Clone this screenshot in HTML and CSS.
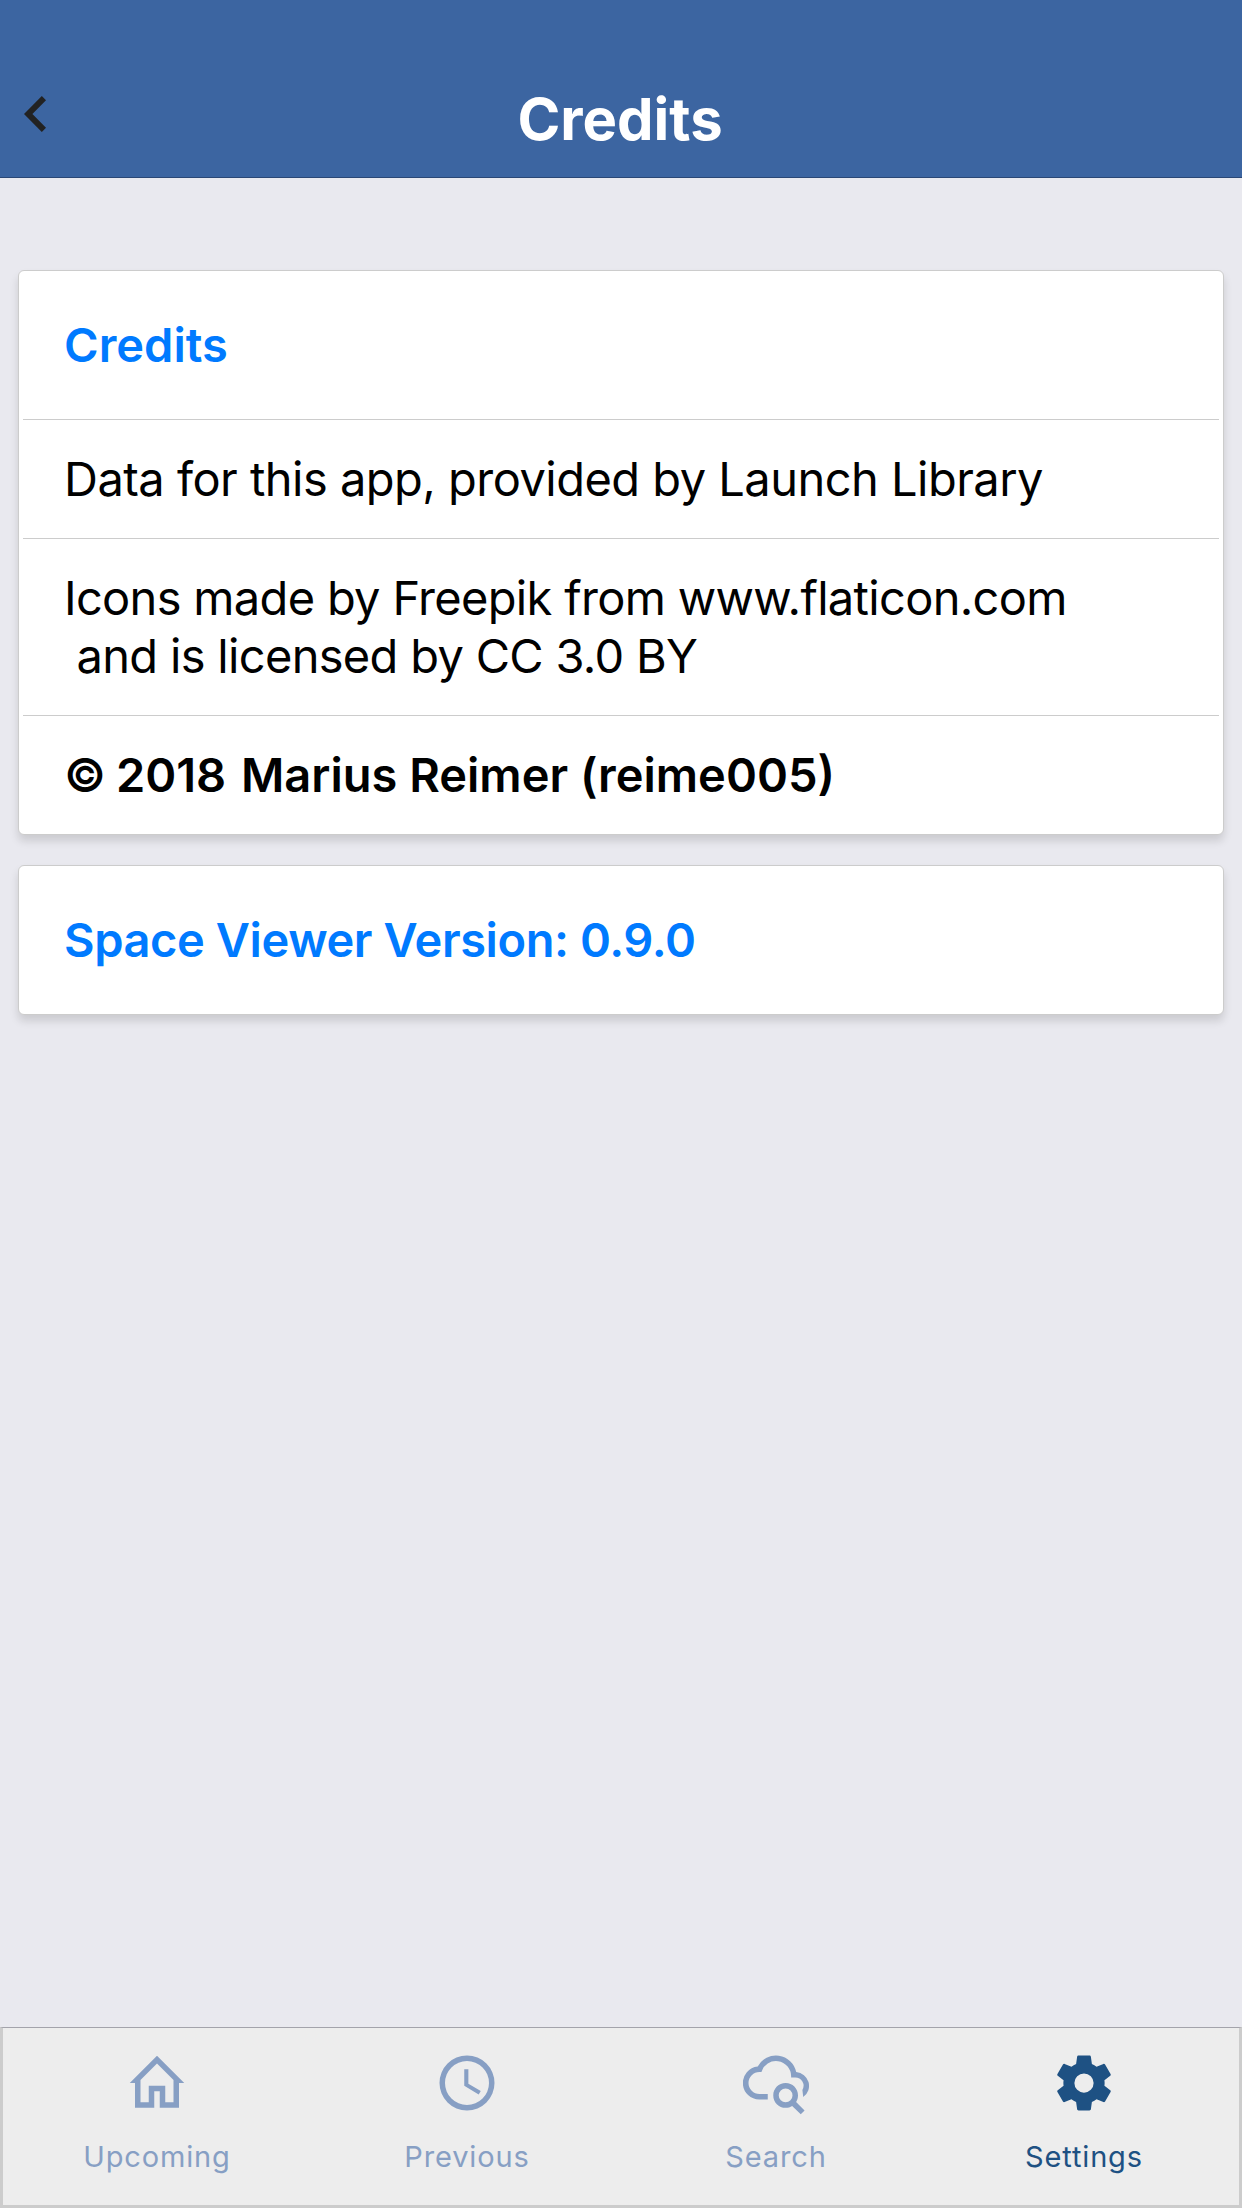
FILE: index.html
```html
<!DOCTYPE html>
<html lang="en">
<head>
<meta charset="utf-8">
<title>Credits</title>
<link rel="stylesheet" href="styles.css">
</head>
<body>
<header class="header">
  <svg class="back" viewBox="8 6 7.41 12" preserveAspectRatio="none"><path d="M15.41 16.59L10.83 12l4.58-4.59L14 6l-6 6 6 6z"/></svg>
  <h1 class="title">Credits</h1>
</header>
<main class="content">
  <section class="card">
    <div class="row row-head">Credits</div>
    <div class="row row-data">Data for this app, provided by Launch Library</div>
    <div class="row row-wide">Icons made by Freepik from www.flaticon.com<br>&nbsp;and is licensed by CC 3.0 BY</div>
    <div class="row row-strong"><span class="copyright">©</span> <span class="year">2018</span> Marius Reimer (reime005)</div>
  </section>
  <section class="card">
    <div class="row row-head row-version">Space Viewer Version: 0.9.0</div>
  </section>
</main>
<nav class="tabs">
  <a class="tab">
    <svg class="icon" viewBox="0 0 24 24"><path fill-rule="evenodd" d="M12 2.1L2.1 12H4v9h7v-6h2v6h7v-9h1.9zM12 4.95l6 6V19h-3v-6H9v6H6v-8.05z"/></svg>
    <span>Upcoming</span>
  </a>
  <a class="tab">
    <svg class="icon" viewBox="0 0 24 24"><path d="M12 20A8 8 0 0 0 20 12 8 8 0 0 0 12 4 8 8 0 0 0 4 12 8 8 0 0 0 12 20M12 2A10 10 0 0 1 22 12 10 10 0 0 1 12 22 10 10 0 0 1 2 12 10 10 0 0 1 12 2M12.5 7V12.25L17 14.92 16.25 16.15 11 13V7z"/></svg>
    <span>Previous</span>
  </a>
  <a class="tab">
    <svg class="icon" viewBox="0 0 24 24"><path d="M15.5 12C18 12 20 14 20 16.5c0 .88-.25 1.71-.69 2.4L22.39 22 21 23.39l-3.12-3.07c-.69.43-1.51.68-2.38.68-2.5 0-4.5-2-4.5-4.5S13 12 15.5 12m0 2a2.5 2.5 0 0 0 0 5 2.5 2.5 0 0 0 0-5M9 18H6a6 6 0 0 1-.65-11.97A7.5 7.5 0 0 1 19.35 8.03 5 5 0 0 1 21.9 17.1L21.6 14.5A3 3 0 0 0 19 10h-1.5v-.5A5.5 5.5 0 0 0 6.71 8H6a4 4 0 0 0 0 8h3z"/></svg>
    <span>Search</span>
  </a>
  <a class="tab tab-active">
    <svg class="icon" viewBox="0 0 24 24"><path d="M12 15.5A3.5 3.5 0 0 1 8.5 12 3.5 3.5 0 0 1 12 8.5 3.5 3.5 0 0 1 15.5 12 3.5 3.5 0 0 1 12 15.5M19.43 12.97C19.47 12.65 19.5 12.33 19.5 12 19.5 11.67 19.47 11.34 19.43 11L21.54 9.37C21.73 9.22 21.78 8.95 21.66 8.73L19.66 5.27C19.54 5.05 19.27 4.96 19.05 5.05L16.56 6.05C16.04 5.66 15.5 5.32 14.87 5.07L14.5 2.42C14.46 2.18 14.25 2 14 2H10C9.75 2 9.54 2.18 9.5 2.42L9.13 5.07C8.5 5.32 7.96 5.66 7.44 6.05L4.95 5.05C4.73 4.96 4.46 5.05 4.34 5.27L2.34 8.73C2.21 8.95 2.27 9.22 2.46 9.37L4.57 11C4.53 11.34 4.5 11.67 4.5 12 4.5 12.33 4.53 12.65 4.57 12.97L2.46 14.63C2.27 14.78 2.21 15.05 2.34 15.27L4.34 18.73C4.46 18.95 4.73 19.03 4.95 18.95L7.44 17.94C7.96 18.34 8.5 18.68 9.13 18.93L9.5 21.58C9.54 21.82 9.75 22 10 22H14C14.25 22 14.46 21.82 14.5 21.58L14.87 18.93C15.5 18.67 16.04 18.34 16.56 17.94L19.05 18.95C19.27 19.03 19.54 18.95 19.66 18.73L21.66 15.27C21.78 15.05 21.73 14.78 21.54 14.63z"/></svg>
    <span>Settings</span>
  </a>
</nav>
</body>
</html>
```
FILE: styles.css
```css
* { box-sizing: border-box; }
body {
  margin: 0;
  height: 2208px;
  display: flex;
  flex-direction: column;
  background: #e9e9ef;
  color: #000;
  font-family: Inter, "Liberation Sans", sans-serif;
}
.header {
  height: 178px;
  padding: 60px 24px 0;
  display: grid;
  grid-template-columns: 22px 1fr 24px;
  align-items: center;
  background: #3c65a1;
  border-bottom: 1px solid #2a4775;
}
.back { width: 22px; height: 36px; margin-bottom: 9px; fill: #222; }
.title {
  margin: 0;
  text-align: center;
  font-size: 58px;
  font-weight: 700;
  line-height: 70px;
  color: #fff;
}
.content {
  flex: 1;
  padding: 92px 18px 0;
  display: flex;
  flex-direction: column;
  gap: 30px;
}
.card {
  padding: 0 4px;
  background: #fff;
  border: 1px solid #ccc;
  border-radius: 6px;
  box-shadow: 0 6px 9px rgba(0, 0, 0, 0.13);
}
.row {
  height: 119px;
  padding: 30px 41px 0;
  font-size: 47px;
  line-height: 58px;
}
.row + .row { border-top: 1px solid #ccc; }
.row-data { letter-spacing: -0.52px; }
.row-head { height: 148px; padding-top: 45px; font-weight: 600; color: #007aff; }
.row-wide { height: 177px; letter-spacing: -0.68px; }
.row-strong { font-weight: 600; }
.row-version { letter-spacing: -0.42px; }
.copyright { font-size: 46px; letter-spacing: -2px; }
.year { margin-right: 3px; }
.tabs {
  height: 181px;
  display: grid;
  grid-template-columns: 308px 312px 306px 310px;
  background: #ededed;
  border: 3px solid #ccc;
  border-top: 1px solid #a3a3ab;
}
.tab {
  display: flex;
  flex-direction: column;
  align-items: center;
  padding-top: 22px;
  gap: 23px;
  color: #879fc4;
  font-size: 29px;
  line-height: 36px;
  letter-spacing: 0.85px;
}
.tab-active { color: #1e5183; }
.icon { width: 66px; height: 66px; fill: currentColor; }
```
